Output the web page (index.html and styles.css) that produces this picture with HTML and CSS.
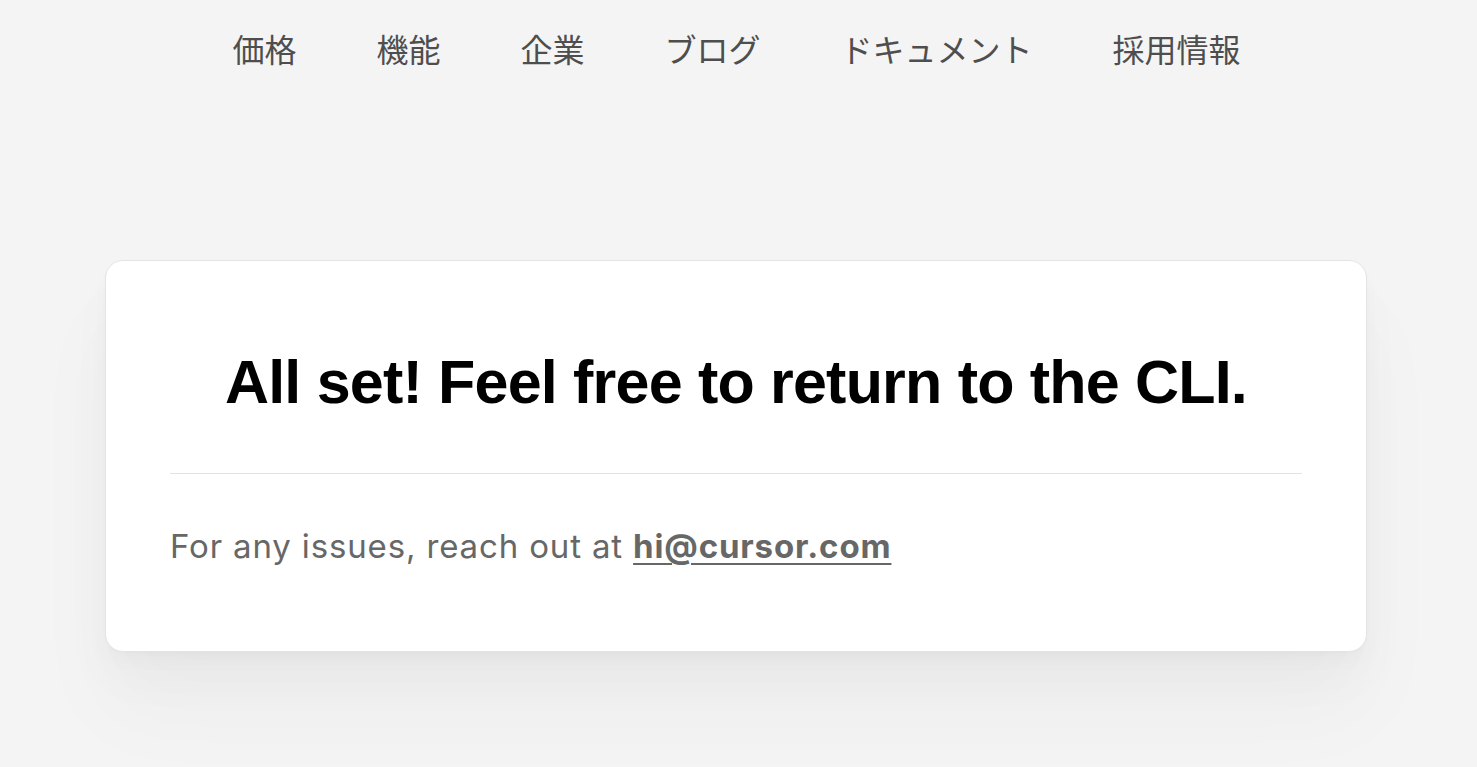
FILE: index.html
```html
<!DOCTYPE html>
<html lang="ja">
<head>
<meta charset="utf-8">
<title>All set</title>
<link rel="stylesheet" href="styles.css">
</head>
<body>
<nav class="nav">
  <a class="nav-item" href="#">価格</a>
  <a class="nav-item" href="#">機能</a>
  <a class="nav-item" href="#">企業</a>
  <a class="nav-item" href="#">ブログ</a>
  <a class="nav-item" href="#">ドキュメント</a>
  <a class="nav-item" href="#">採用情報</a>
</nav>
<main class="main">
  <section class="card">
    <h1 class="title">All set! Feel free to return to the CLI.</h1>
    <hr class="divider">
    <p class="note">For any issues, reach out at <a class="mail" href="#">hi@cursor.com</a></p>
  </section>
</main>
</body>
</html>
```
FILE: styles.css
```css
html, body {
  margin: 0;
  padding: 0;
  background: #f4f4f4;
}
body {
  font-family: "Liberation Sans", Arial, sans-serif;
  min-height: 767px;
  overflow: hidden;
}
.nav {
  display: flex;
  justify-content: center;
  gap: 80px;
  padding: 24px 4px 0 0;
}
.nav-item {
  font-family: "Noto Sans CJK JP", "Noto Sans", sans-serif;
  font-size: 32px;
  line-height: 48px;
  color: #4e4e4e;
  text-decoration: none;
}
.main {
  padding: 188px 110px 0 105px;
}
.card {
  background: #fff;
  border: 1px solid #e4e4e4;
  border-radius: 18px;
  padding: 91px 64px 88px;
  box-shadow:
    0 2px 4px rgba(0, 0, 0, 0.015),
    0 10px 20px rgba(0, 0, 0, 0.02),
    0 30px 50px rgba(0, 0, 0, 0.025),
    0 60px 90px rgba(0, 0, 0, 0.03);
}
.title {
  margin: 0;
  font-size: 61px;
  line-height: 61px;
  font-weight: 700;
  letter-spacing: -0.8px;
  text-align: center;
  color: #000;
}
.divider {
  margin: 60px 0 0;
  border: 0;
  height: 1px;
  background: #e3e3e3;
}
.note {
  margin: 56px 0 0;
  font-family: Inter, "Liberation Sans", sans-serif;
  font-size: 33px;
  line-height: 33px;
  letter-spacing: 0.85px;
  color: #676767;
}
.mail {
  color: #676767;
  font-weight: 700;
  text-decoration: underline;
  text-decoration-thickness: 2px;
  text-underline-offset: 5px;
}
```
